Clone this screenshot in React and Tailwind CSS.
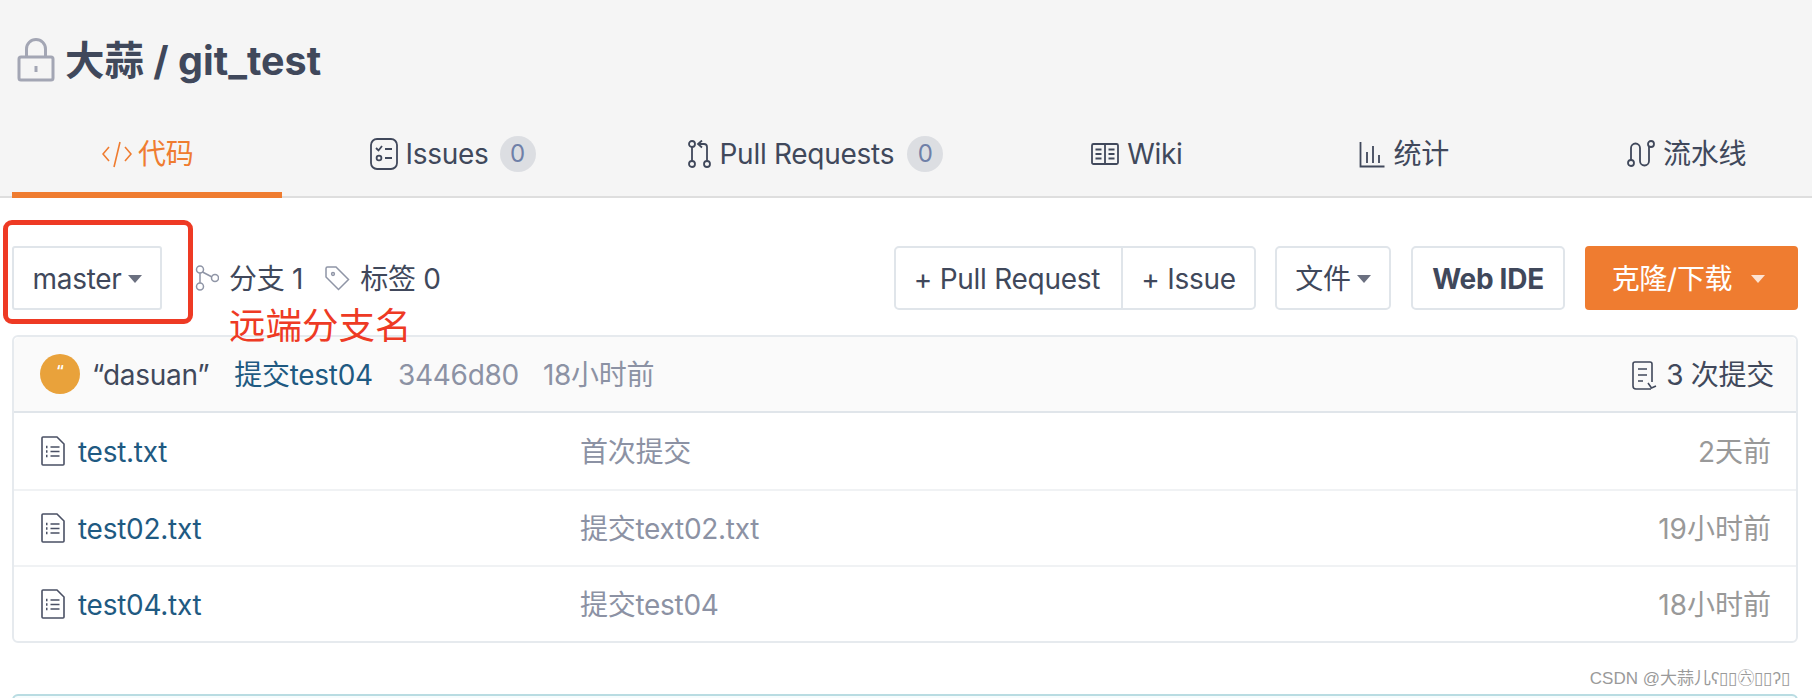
import React from 'react';

const FONT = 'font-["Inter","Noto_Sans_CJK_SC",sans-serif]';

const LockIcon = () => (
  <svg width="38" height="44" viewBox="0 0 38 44" fill="none" stroke="#a3a6b4" strokeWidth="3">
    <rect x="2" y="19" width="34" height="23" rx="2" />
    <path d="M9.5 19V11a9.5 9.5 0 0 1 19 0v8" />
    <path d="M19 28v6" />
  </svg>
);

const CodeIcon = () => (
  <svg width="30" height="30" viewBox="0 0 30 30" fill="none" stroke="#ef7c30" strokeWidth="1.6">
    <path d="M7 8l-6 7 6 7M23 8l6 7-6 7M18 3l-6 25" />
  </svg>
);

const IssuesIcon = () => (
  <svg width="28" height="32" viewBox="0 0 28 32" fill="none" stroke="#40485b" strokeWidth="1.8">
    <rect x="1" y="1" width="26" height="30" rx="6" />
    <path d="M6 10l2.5 2.5L12 8M15 11h7M15 20h7" />
    <circle cx="9" cy="20" r="2.4" />
  </svg>
);

const PullIcon = () => (
  <svg width="23" height="28" viewBox="0 0 23 28" fill="none" stroke="#40485b" strokeWidth="1.8">
    <circle cx="4" cy="4" r="3" />
    <circle cx="4" cy="24" r="3" />
    <circle cx="19" cy="24" r="3" />
    <path d="M4 7v14M19 21V7a3 3 0 0 0-3-3h-5M14 0.5L10 4l4 3.5" />
  </svg>
);

const WikiIcon = () => (
  <svg width="28" height="24" viewBox="0 0 28 24" fill="none" stroke="#40485b" strokeWidth="1.8">
    <rect x="1" y="2" width="26" height="20" rx="1.5" />
    <path d="M14 2v20M4.5 7.5h6M4.5 12h6M4.5 16.5h6M17.5 7.5h6M17.5 12h6M17.5 16.5h6" />
  </svg>
);

const StatsIcon = () => (
  <svg width="26" height="27" viewBox="0 0 26 27" fill="none" stroke="#40485b" strokeWidth="1.8">
    <path d="M1.5 1v24.5h24M8 11v11M14 5v17M20 14v8" />
  </svg>
);

const PipelineIcon = () => (
  <svg width="28" height="28" viewBox="0 0 28 28" fill="none" stroke="#40485b" strokeWidth="1.8">
    <circle cx="4" cy="23" r="3" />
    <circle cx="24" cy="4" r="3" />
    <path d="M4 20V8a4.5 4.5 0 0 1 9 0v13a4.5 4.5 0 0 0 9 0V7" />
  </svg>
);

const BranchIcon = () => (
  <svg width="24" height="26" viewBox="0 0 24 26" fill="none" stroke="#8f95a6" strokeWidth="1.5">
    <circle cx="5" cy="4.5" r="3.5" />
    <circle cx="5" cy="21.5" r="3.5" />
    <circle cx="20" cy="13" r="3.5" />
    <path d="M5 8v10M7.5 7l9.5 5" />
  </svg>
);

const TagIcon = () => (
  <svg width="25" height="25" viewBox="0 0 25 25" fill="none" stroke="#8f95a6" strokeWidth="1.5">
    <path d="M1 2.5a1.5 1.5 0 0 1 1.5-1.5H11l12.5 12.5-10 10L1 11z" />
    <circle cx="8" cy="8" r="1.4" />
  </svg>
);

const CommitsIcon = () => (
  <svg width="25" height="29" viewBox="0 0 25 29" fill="none" stroke="#40485b" strokeWidth="1.6">
    <path d="M20 21V3a2 2 0 0 0-2-2H3a2 2 0 0 0-2 2v22a3 3 0 0 0 3 3h15" />
    <path d="M6 8h9M6 14h9M6 20h5M16 22l3.5 5 4.5-2" />
  </svg>
);

const FileIcon = () => (
  <svg width="24" height="30" viewBox="0 0 24 30" fill="none" stroke="#4a5064" strokeWidth="1.6">
    <path d="M2 1h14l7 7v20a1 1 0 0 1-1 1H2a1 1 0 0 1-1-1V2a1 1 0 0 1 1-1z" />
    <path d="M9.5 11h9M9.5 15.5h9M9.5 20h9" />
    <path d="M5 11h1.5M5 15.5h1.5M5 20h1.5" strokeWidth="2.4" />
  </svg>
);

const Caret = ({ className }) => (
  <span className={`inline-block w-0 h-0 border-x-[7px] border-x-transparent border-t-[8px] ${className}`} />
);

const Badge = () => (
  <span className="ml-[4px] flex h-[36px] w-[36px] items-center justify-center rounded-full bg-[#dcdee2] text-[#6f80a8] text-[24px]">
    0
  </span>
);

const tabs = [
  { label: '代码', icon: CodeIcon, pad: 'pl-[90px] pr-[89px]', active: true, gap: 'gap-[6px]' },
  { label: 'Issues', icon: IssuesIcon, pad: 'pl-[88px] pr-[76px]', badge: true, gap: 'gap-[7px]' },
  { label: 'Pull Requests', icon: PullIcon, pad: 'pl-[76px] pr-[73px]', badge: true, gap: 'gap-[9px]' },
  { label: 'Wiki', icon: WikiIcon, pad: 'pl-[75px] pr-[88px]', gap: 'gap-[8px]' },
  { label: '统计', icon: StatsIcon, pad: 'pl-[88px] pr-[89px]', gap: 'gap-[9px]' },
  { label: '流水线', icon: PipelineIcon, pad: 'pl-[89px]', gap: 'gap-[8px]' },
];

const files = [
  { name: 'test.txt', message: '首次提交', time: '2天前' },
  { name: 'test02.txt', message: '提交text02.txt', time: '19小时前' },
  { name: 'test04.txt', message: '提交test04', time: '18小时前' },
];

const Header = () => (
  <div className="bg-[#f5f5f5] h-[198px] border-b-2 border-[#dedede]">
    <div className="flex items-center h-[122px] pl-[17px] pb-[2px]">
      <LockIcon />
      <h1 className="ml-[10px] pt-[4px] text-[39.5px] font-bold text-[#40485b] leading-none">大蒜 / git_test</h1>
    </div>
    <div className="flex pl-[12px] h-[76px]">
      {tabs.map(tab => {
        const Icon = tab.icon;
        return (
          <div
            key={tab.label}
            className={`flex items-center h-[76px] pb-[6px] whitespace-nowrap text-[28px] tracking-[-0.01em] border-b-[6px] ${tab.pad} ${tab.gap} ${tab.active ? 'border-[#ef7c30] text-[#ef7c30]' : 'border-transparent text-[#40485b]'}`}
          >
            <Icon />
            <span>{tab.label}</span>
            {tab.badge && <Badge />}
          </div>
        );
      })}
    </div>
  </div>
);

const Toolbar = () => (
  <div className="flex items-center h-[64px] mt-[48px] ml-[12px] mr-[14px] text-[28px] tracking-[-0.01em] text-[#40485b]">
    <button className="flex items-center gap-[6px] h-[64px] w-[150px] pt-[2px] justify-center border-2 border-[#e0e5ea] rounded-[3px]">
      master
      <Caret className="border-t-[#6b7080]" />
    </button>
    <span className="ml-[33px] flex"><BranchIcon /></span>
    <span className="ml-[10px] pt-[2px]">分支 1</span>
    <span className="ml-[22px] flex"><TagIcon /></span>
    <span className="ml-[10px] pt-[2px]">标签 0</span>
    <div className="ml-auto flex items-center h-[64px]">
      <div className="flex h-full border-2 border-[#e0e5ea] rounded-[5px]">
        <span className="flex items-center justify-center w-[227px] pt-[2px] pr-[3px] border-r-2 border-[#e0e5ea]">+ Pull Request</span>
        <span className="flex items-center justify-center w-[131px] pt-[2px]">+ Issue</span>
      </div>
      <button className="ml-[19px] flex items-center justify-center gap-[6px] h-full w-[116px] pt-[2px] border-2 border-[#e0e5ea] rounded-[5px]">
        文件
        <Caret className="border-t-[#6b7080]" />
      </button>
      <button className="ml-[20px] h-full w-[154px] pt-[2px] border-2 border-[#e0e5ea] rounded-[5px] font-bold">Web IDE</button>
      <button className="ml-[20px] flex items-center justify-center gap-[19px] h-full w-[213px] pt-[2px] pr-[6px] rounded-[4px] bg-[#ef7c30] text-white">
        克隆/下载
        <Caret className="border-t-[#fde3d2]" />
      </button>
    </div>
  </div>
);

const FilePanel = () => (
  <div className="ml-[12px] mr-[14px] mt-[25px] border-2 border-[#e6eaee] rounded-[6px] text-[28px] tracking-[-0.01em]">
    <div className="flex items-center h-[76px] pl-[26px] pr-[22px] bg-[#fafafa] border-b-2 border-[#e0e5ea] rounded-t-[6px]">
      <span className="flex h-[40px] w-[40px] items-center justify-center rounded-full bg-[#e9a23b] text-white text-[14px] font-bold pb-[8px]">“</span>
      <span className="ml-[12px] pt-[2px] text-[#40485b]">“dasuan”</span>
      <span className="ml-[25px] pt-[2px] text-[#1f5a82]">提交test04</span>
      <span className="ml-[25px] pt-[2px] text-[#8c92a4]">3446d80</span>
      <span className="ml-[24px] pt-[2px] text-[#8c92a4]">18小时前</span>
      <span className="ml-auto flex items-center gap-[9px] pt-[2px] text-[#40485b]">
        <CommitsIcon />
        3 次提交
      </span>
    </div>
    {files.map((file, index) => (
      <div
        key={file.name}
        className={`flex items-center h-[76px] pl-[27px] pr-[25px] ${index > 0 ? 'border-t-2 border-[#f0f2f4]' : ''}`}
      >
        <FileIcon />
        <span className="ml-[13px] w-[502px] pt-[2px] text-[#1f5a82]">{file.name}</span>
        <span className="pt-[2px] text-[#8c92a4]">{file.message}</span>
        <span className="ml-auto pt-[2px] tracking-normal text-[#999999]">{file.time}</span>
      </div>
    ))}
  </div>
);

export default function App() {
  return (
    <div className={`relative h-[698px] w-[1812px] overflow-hidden bg-white ${FONT}`}>
      <Header />
      <Toolbar />
      <FilePanel />
      <div className="ml-[12px] mr-[14px] mt-[51px] h-[20px] border-2 border-[#b9dce2] rounded-t-[6px] bg-[#f6fcfd]" />

      {/* red annotation drawn over the screenshot */}
      <div className="absolute left-[3px] top-[220px] h-[104px] w-[190px] border-[5px] border-[#ee3a24] rounded-[9px]" />
      <span className="absolute left-[229px] top-[304px] text-[36.5px] leading-[44px] text-[#ee3a24]">远端分支名</span>

      {/* watermark */}
      <span className="absolute right-[22px] top-[667px] text-[17px] leading-[24px] text-[#9a9a9a] font-['Liberation_Sans','Noto_Sans_CJK_SC',sans-serif] whitespace-nowrap">
        CSDN @大蒜儿ʕ▯▯㊅▯▯ʔ▯
      </span>
    </div>
  );
}
